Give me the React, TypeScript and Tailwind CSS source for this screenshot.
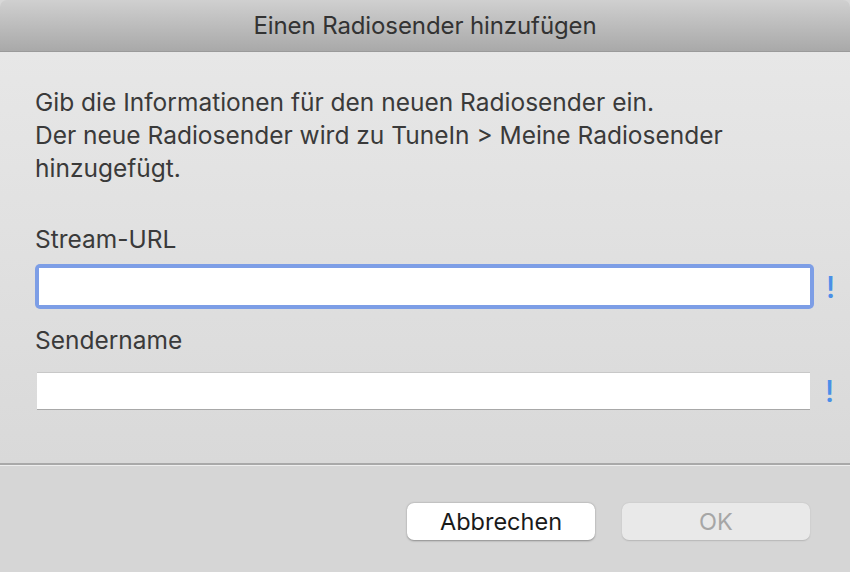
export default function App() {
    return (
        <div className="w-[850px] h-[572px] flex flex-col bg-[#d8d8d8] overflow-hidden" style={{ fontFamily: "Inter, Roboto, 'Noto Sans', sans-serif" }}>
            <header className="h-[52px] shrink-0 rounded-t-[7px] bg-gradient-to-b from-[#d0d0d0] to-[#a9a9a9] border-b border-[#9a9a9a] flex items-center justify-center">
                <h1 className="text-[24px] text-[#333333] tracking-[-0.1px]">Einen Radiosender hinzufügen</h1>
            </header>
            <main className="flex-1 bg-gradient-to-b from-[#e7e7e7] to-[#d9d9d9] pl-[35px] pt-[34px]">
                <p className="text-[24.5px] leading-[33px] text-[#3a3a3a] w-[720px]">
                    Gib die Informationen für den neuen Radiosender ein.<br />
                    Der neue Radiosender wird zu TuneIn &gt; Meine Radiosender hinzugefügt.
                </p>
                <label className="block mt-[38px] text-[24.5px] leading-[33px] text-[#3a3a3a]">Stream-URL</label>
                <div className="flex items-center mt-[8px]">
                    <div className="w-[779px] h-[45px] shrink-0 rounded-[5px] bg-[#7d9ee6] p-[4px]">
                        <input className="w-full h-full bg-white outline-none" type="text" />
                    </div>
                    <span className="ml-[12px] text-[30px] font-medium text-[#4a8fe8] leading-none">!</span>
                </div>
                <label className="block mt-[15px] text-[24.5px] leading-[33px] text-[#3a3a3a]">Sendername</label>
                <div className="flex items-center mt-[15px] pl-[2px]">
                    <input className="w-[773px] h-[38px] shrink-0 bg-white border-t border-[#c8c8c8] border-b border-b-[#a8a8a8] outline-none" type="text" />
                    <span className="ml-[15px] text-[30px] font-medium text-[#4a8fe8] leading-none">!</span>
                </div>
            </main>
            <div className="h-[2px] bg-[#a9a9a9] shrink-0" />
            <div className="h-[1px] bg-[#eeeeee] shrink-0" />
            <footer className="h-[106px] shrink-0 bg-[#d6d6d6] flex justify-end items-start pt-[37px] pr-[40px] gap-[27px]">
                <button className="w-[188px] h-[37px] rounded-[7px] bg-white shadow-[0_0.5px_2px_rgba(0,0,0,0.35)] text-[23.5px] text-[#1a1a1a]">Abbrechen</button>
                <button className="w-[188px] h-[37px] rounded-[7px] bg-[#e9e9e9] shadow-[0_0.5px_1.5px_rgba(0,0,0,0.15)] text-[23.5px] text-[#a6a6a6]" disabled>OK</button>
            </footer>
        </div>
    )
}
